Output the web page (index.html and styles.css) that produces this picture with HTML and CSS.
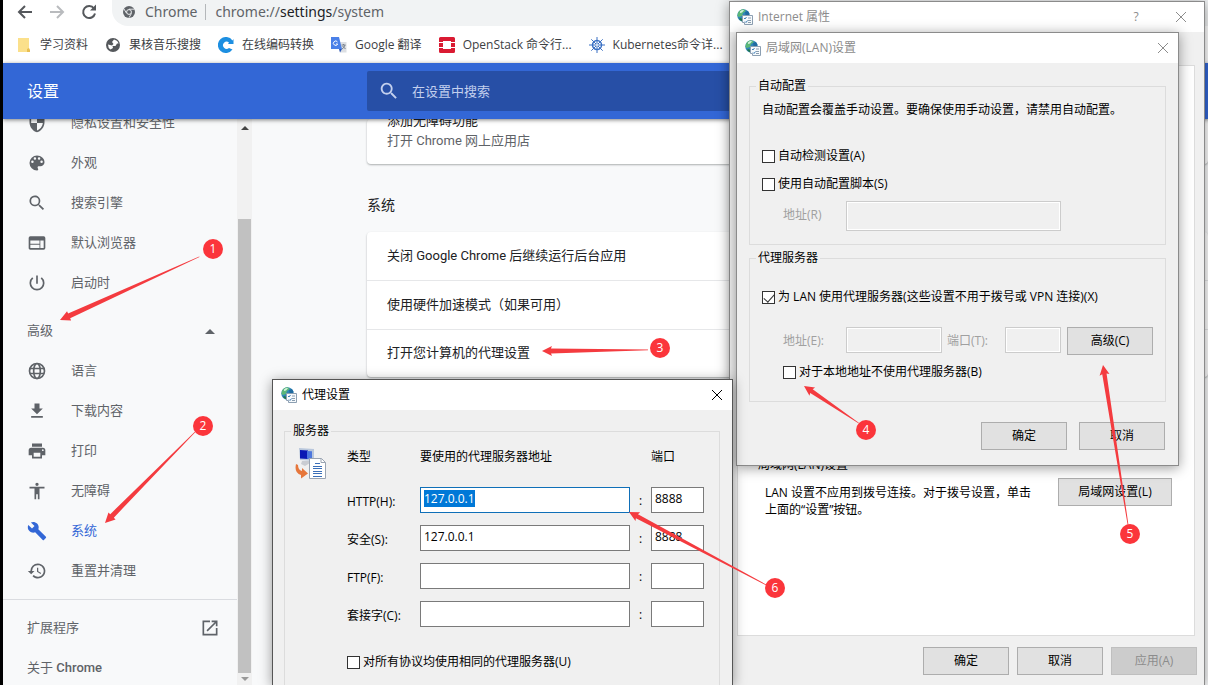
FILE: index.html
```html
<!DOCTYPE html>
<html lang="zh-CN">
<head>
    <meta charset="UTF-8">
    <meta name="viewport" content="width=device-width, initial-scale=1.0">
    <title>设置 - 系统</title>
    <link rel="stylesheet" href="styles.css">
</head>
<body>
    <!-- shared icons -->
    <svg class="defs" width="0" height="0">
        <symbol id="i-inet" viewBox="0 0 16 16">
            <circle cx="6.5" cy="6.5" r="6.2" fill="#2f86b8"/>
            <path d="M1 4Q3 0 7 .4L9 2 6 4 5 7 2 8 .4 7Z" fill="#5cb878"/>
            <path d="M3 2.5Q5 .8 7 1.2L5 3.5 3 4Z" fill="#d5f2dc"/>
            <path d="M8 3l3-1 1.6 3-2 2-2-1z" fill="#1f6aa0"/>
            <path d="M3 9l3 1 1 3Q4 12.500 2 10z" fill="#23774f"/>
            <path d="M5.500 6.500h10v9h-8v-2h-2z" fill="#f7fafc" stroke="#8c9fb2"/>
            <path d="M11 9h3M11 11.500h3M11 13.500h3" stroke="#8a9db0"/>
            <path d="M7 9l1 1 1.500-2M8 12.500l1 1 1.500-2" stroke="#3d7fb8" fill="none"/>
        </symbol>
        <symbol id="i-x" viewBox="0 0 12 12">
            <path d="M1 1l10 10M11 1L1 11" stroke="currentColor" fill="none"/>
        </symbol>
        <symbol id="i-search" viewBox="0 0 24 24">
            <path fill="currentColor" d="M15.500 14h-.8l-.3-.3A6.500 6.500 0 1 0 13.700 14.400l.3.3v.8l5 5 1.500-1.500-5-5zm-6 0a4.500 4.500 0 1 1 0-9 4.500 4.500 0 0 1 0 9z"/>
        </symbol>
    </svg>

    <div class="browser">
        <div class="toolbar">
            <button class="nav-btn" aria-label="后退"><svg width="18" height="18" viewBox="0 0 18 18"><path d="M16 9H3M9 3L3 9l6 6" fill="none" stroke="#55585c" stroke-width="2"/></svg></button>
            <button class="nav-btn" aria-label="前进"><svg width="18" height="18" viewBox="0 0 18 18"><path d="M2 9h13M9 3l6 6-6 6" fill="none" stroke="#b9bbbe" stroke-width="2"/></svg></button>
            <button class="nav-btn" aria-label="重新加载"><svg width="18" height="18" viewBox="0 0 18 18"><path d="M14 5.500A6 6 0 1 0 15 10.500" fill="none" stroke="#55585c" stroke-width="2"/><path d="M16 1.500v6h-6z" fill="#55585c"/></svg></button>
            <div class="omnibox">
                <svg width="12" height="12" viewBox="0 0 12 12"><circle cx="6" cy="6" r="6" fill="#5f6368"/><circle cx="6" cy="6" r="2.400" fill="#5f6368" stroke="#f1f3f4"/><path d="M6 3.200h5.500M3.500 7.200L1 3M8.500 7.400L6 11.700" stroke="#f1f3f4" stroke-width=".9"/></svg>
                <span class="scheme">Chrome</span>
                <span class="sep"></span>
                <span class="url">chrome://<b>settings</b>/system</span>
            </div>
        </div>

        <nav class="bookmarks">
            <a href="#"><svg width="16" height="16" viewBox="0 0 16 16"><path d="M2 1h11v14H2z" fill="#fbe08b"/><path d="M11 12l2-1 1 2v2h-3z" fill="#e9bf52"/></svg>学习资料</a>
            <a href="#"><svg width="16" height="16" viewBox="0 0 16 16"><circle cx="8" cy="8" r="7" fill="#55585c"/><path d="M9 2.500L7 5l1.500 2L7 8.500 3 7.500Q3 11 5.500 12.500L8 11l-.5-2h3l1.500-2.500h1.500Q13 3.500 9 2.500z" fill="#fff"/></svg>果核音乐搜搜</a>
            <a href="#"><svg width="16" height="16" viewBox="0 0 16 16"><path d="M14.500 3.500A8 8 0 1 0 14.500 12.500L11 11A3.600 3.600 0 1 1 11 5.500L10 7h5.500V2z" fill="#1d8fe1"/></svg>在线编码转换</a>
            <a href="#"><svg width="16" height="16" viewBox="0 0 16 16"><path d="M7 5h8.500v10.500H9z" fill="#dcdfe3"/><path d="M0 0h8l3 12H0z" fill="#4a80e8"/><path d="M8 12h3l-2 3.500z" fill="#2a56b8"/><path d="M6.500 5A2.200 2.200 0 1 0 6.700 7H5" fill="none" stroke="#fff"/><path d="M10.500 8h4M12.500 7v1M14 8q-1 3-3 4M11.500 9l3 3" fill="none" stroke="#78828e"/></svg>Google 翻译</a>
            <a href="#"><svg width="16" height="16" viewBox="0 0 16 16"><path fill="#da1a32" d="M1.500 0h13A1.500 1.500 0 0 1 16 1.500V5h-4V4H4v1H0V1.500A1.500 1.500 0 0 1 1.500 0zM0 6h4v4H0zM12 6h4v4h-4zM0 11h4v1h8v-1h4v3.500a1.500 1.500 0 0 1-1.500 1.500h-13A1.500 1.500 0 0 1 0 14.500z"/></svg>OpenStack 命令行...</a>
            <a href="#"><svg width="16" height="16" viewBox="0 0 16 16"><g fill="none" stroke="#3b70c4"><circle cx="8" cy="8" r="4.500" stroke-width="1.500"/><path d="M8 0v16M0 8h16M2.300 2.300l11.400 11.400M13.700 2.300L2.300 13.700"/></g><circle cx="8" cy="8" r="1" fill="#fff"/></svg>Kubernetes命令详...</a>
        </nav>

        <header class="header">
            <h1>设置</h1>
            <div class="search">
                <svg width="22" height="22"><use href="#i-search"/></svg>
                <input type="text" aria-label="搜索" placeholder="在设置中搜索">
            </div>
        </header>

        <div class="content">
            <nav class="sidebar">
                <a href="#"><svg viewBox="0 0 24 24"><path d="M12 1L3 5v6c0 5.500 3.800 10.700 9 12 5.200-1.300 9-6.500 9-12V5zm0 11h7c-.5 4.100-3.300 7.800-7 8.900V12H5V6.300l7-3.100z"/></svg>隐私设置和安全性</a>
                <a href="#"><svg viewBox="0 0 24 24"><path d="M12 3a9 9 0 0 0 0 18c.8 0 1.500-.7 1.500-1.500 0-.4-.1-.7-.4-1-.2-.3-.4-.6-.4-1 0-.8.7-1.500 1.500-1.500H16a5 5 0 0 0 5-5c0-4.400-4-8-9-8zm-5.500 9a1.500 1.500 0 1 1 0-3 1.500 1.500 0 0 1 0 3zm3-4a1.500 1.500 0 1 1 0-3 1.500 1.500 0 0 1 0 3zm5 0a1.500 1.500 0 1 1 0-3 1.500 1.500 0 0 1 0 3zm3 4a1.500 1.500 0 1 1 0-3 1.500 1.500 0 0 1 0 3z"/></svg>外观</a>
                <a href="#"><svg><use href="#i-search"/></svg>搜索引擎</a>
                <a href="#"><svg viewBox="0 0 24 24"><path d="M20 4H4a2 2 0 0 0-2 2v12c0 1.100.9 2 2 2h16a2 2 0 0 0 2-2V6a2 2 0 0 0-2-2zm-5 14H4v-4h11zm0-5H4V9h11zm5 5h-4V9h4z"/></svg>默认浏览器</a>
                <a href="#"><svg viewBox="0 0 24 24"><path d="M13 3h-2v10h2zm4.800 2.200l-1.400 1.400A7 7 0 1 1 7.600 6.600L6.200 5.200a9 9 0 1 0 11.600 0z"/></svg>启动时</a>
                <button class="advanced">高级<span class="tri-up"></span></button>
                <a href="#"><svg viewBox="0 0 24 24"><g fill="none" stroke="currentColor" stroke-width="2"><circle cx="12" cy="12" r="9"/><ellipse cx="12" cy="12" rx="4" ry="9"/><path d="M3.500 9h17M3.500 15h17"/></g></svg>语言</a>
                <a href="#"><svg viewBox="0 0 24 24"><path d="M19 9h-4V3H9v6H5l7 7zM5 18v2h14v-2z"/></svg>下载内容</a>
                <a href="#"><svg viewBox="0 0 24 24"><path d="M19 8H5a3 3 0 0 0-3 3v6h4v4h12v-4h4v-6a3 3 0 0 0-3-3zm-3 11H8v-5h8zm3-7a1 1 0 1 1 0-2 1 1 0 0 1 0 2zM18 3H6v4h12z"/></svg>打印</a>
                <a href="#"><svg viewBox="0 0 24 24"><path d="M12 2a2 2 0 1 1 0 4 2 2 0 0 1 0-4zm9 7h-6v13h-2v-6h-2v6H9V9H3V7h18z"/></svg>无障碍</a>
                <a href="#" class="active"><svg viewBox="0 0 24 24"><path d="M22.700 19l-9.100-9.100c.9-2.300.4-5-1.500-6.900-2-2-5-2.400-7.400-1.300L9 6 6 9 1.600 4.700C.4 7.100.9 10.100 2.900 12.100c1.900 1.900 4.600 2.400 6.900 1.500l9.100 9.100c.4.4 1 .4 1.400 0l2.300-2.300c.5-.4.5-1.100.1-1.400z"/></svg>系统</a>
                <a href="#"><svg viewBox="0 0 24 24"><path d="M13 3a9 9 0 0 0-9 9H1l4 4 4-4H6a7 7 0 1 1 2 4.900L6.600 18.300A9 9 0 1 0 13 3zm-1 5v5l4.300 2.500.7-1.200-3.500-2.100V8z"/></svg>重置并清理</a>
                <hr>
                <a href="#" class="plain">扩展程序<svg viewBox="0 0 24 24"><path d="M19 19H5V5h7V3H3v18h18v-9h-2zM14 3v2h3.600l-9.800 9.800 1.400 1.400L19 6.400V10h2V3z"/></svg></a>
                <a href="#" class="plain about"><span>关于 <b>Chrome</b></span></a>
            </nav>
            <div class="scrollbar">
                <span class="sb-btn"><span class="sb-up"></span></span>
                <span class="sb-track"><span class="sb-thumb"></span></span>
                <span class="sb-btn"><span class="sb-down"></span></span>
            </div>
            <main class="main">
                <section class="card top-card">
                    <div>添加无障碍功能</div>
                    <div class="sub">打开 Chrome 网上应用店</div>
                </section>
                <h2>系统</h2>
                <section class="card">
                    <div class="row">关闭 Google Chrome 后继续运行后台应用</div>
                    <div class="row">使用硬件加速模式（如果可用）</div>
                    <div class="row">打开您计算机的代理设置</div>
                </section>
            </main>
        </div>
    </div>

    <!-- Internet properties -->
    <div class="window win-inet">
        <div class="titlebar inactive">
            <svg class="app-icon"><use href="#i-inet"/></svg>
            <span class="title">Internet 属性</span>
            <button class="tb-btn" aria-label="帮助">?</button>
            <button class="tb-btn" aria-label="关闭"><svg width="12" height="12"><use href="#i-x"/></svg></button>
        </div>
        <div class="tab-panel">
            <div class="group-title">局域网(LAN)设置</div>
            <div class="lan-row">
                <p>LAN 设置不应用到拨号连接。对于拨号设置，单击上面的“设置”按钮。</p>
                <button class="btn wide">局域网设置(L)</button>
            </div>
        </div>
        <div class="btn-row">
            <button class="btn">确定</button>
            <button class="btn">取消</button>
            <button class="btn" disabled>应用(A)</button>
        </div>
    </div>

    <!-- LAN settings -->
    <div class="window win-lan">
        <div class="titlebar inactive">
            <svg class="app-icon"><use href="#i-inet"/></svg>
            <span class="title">局域网(LAN)设置</span>
            <button class="tb-btn" aria-label="关闭"><svg width="12" height="12"><use href="#i-x"/></svg></button>
        </div>
        <div class="win-body">
            <fieldset class="auto">
                <legend>自动配置</legend>
                <p>自动配置会覆盖手动设置。要确保使用手动设置，请禁用自动配置。</p>
                <label class="check"><input type="checkbox">自动检测设置(A)</label>
                <label class="check"><input type="checkbox">使用自动配置脚本(S)</label>
                <div class="addr">
                    <label for="script-url">地址(R)</label>
                    <input type="text" id="script-url" class="script-url" disabled>
                </div>
            </fieldset>
            <fieldset class="proxy">
                <legend>代理服务器</legend>
                <label class="check"><input type="checkbox" checked>为 LAN 使用代理服务器(这些设置不用于拨号或 VPN 连接)(X)</label>
                <div class="addr">
                    <label for="proxy-addr">地址(E):</label>
                    <input type="text" id="proxy-addr" class="proxy-addr" disabled>
                    <label for="proxy-port" class="port-label">端口(T):</label>
                    <input type="text" id="proxy-port" class="proxy-port" disabled>
                    <button class="btn">高级(C)</button>
                </div>
                <label class="check indent"><input type="checkbox">对于本地地址不使用代理服务器(B)</label>
            </fieldset>
            <div class="btn-row">
                <button class="btn">确定</button>
                <button class="btn">取消</button>
            </div>
        </div>
    </div>

    <!-- Proxy settings -->
    <div class="window win-proxy">
        <div class="titlebar">
            <svg class="app-icon"><use href="#i-inet"/></svg>
            <span class="title">代理设置</span>
            <button class="tb-btn" aria-label="关闭"><svg width="12" height="12"><use href="#i-x"/></svg></button>
        </div>
        <fieldset class="servers">
            <legend>服务器</legend>
            <svg class="server-icon" width="32" height="32" viewBox="0 0 32 32">
                <path d="M4 0l15 1v12L5 12z" fill="#b9c7dc"/>
                <path d="M5 2l8 .5V11l-8-.5z" fill="#0a18b4"/>
                <path d="M12 3l5 .3V11l-5-.3z" fill="#4d77dd"/>
                <path d="M7 13h8v2l-5 3-4-2z" fill="#c9ccd2"/>
                <path d="M14.500 10.500h12l4 4v16h-16z" fill="#fff" stroke="#9aa4b2"/>
                <path d="M26 10.500v4h4.500" fill="none" stroke="#9aa4b2"/>
                <path d="M20 15.500h5M18 18.500h9M18 20.500h9M18 23.500h9M18 25.500h9M18 28.500h9" stroke="#3b6fb8"/>
                <path d="M1 16Q-1 25 6 27v3.500l7-5L7 20v3Q3 22 3 17z" fill="#e6763b"/>
            </svg>
            <div class="grid">
                <span class="head">类型</span>
                <span class="head">要使用的代理服务器地址</span>
                <span></span>
                <span class="head">端口</span>

                <label for="http">HTTP(H):</label>
                <input type="text" id="http" class="current" value="127.0.0.1">
                <span class="colon">:</span>
                <input type="text" aria-label="HTTP 端口" value="8888">

                <label for="secure">安全(S):</label>
                <input type="text" id="secure" value="127.0.0.1">
                <span class="colon">:</span>
                <input type="text" aria-label="安全端口" value="8888">

                <label for="ftp">FTP(F):</label>
                <input type="text" id="ftp">
                <span class="colon">:</span>
                <input type="text" aria-label="FTP 端口">

                <label for="socks">套接字(C):</label>
                <input type="text" id="socks">
                <span class="colon">:</span>
                <input type="text" aria-label="套接字端口">

                <label class="check same"><input type="checkbox">对所有协议均使用相同的代理服务器(U)</label>
            </div>
        </fieldset>
    </div>

    <!-- numbered steps -->
    <svg class="steps">
        <g class="arrow">
            <path transform="translate(60 320) rotate(-24.400)" d="M0 0L10-5 10-2.500 153-.3V.3L10 2.500 10 5z"/>
            <path transform="translate(105 523) rotate(-45.300)" d="M0 0L10-5 10-2.500 128-.3V.3L10 2.500 10 5z"/>
            <path transform="translate(542 351) rotate(-.6)" d="M0 0L10-5 9-2.500 106-.3V.3L9 2.500 10 5z"/>
            <path transform="translate(804 386) rotate(34.200)" d="M0 0L10-5 9-2.200 66-.3V.3L9 2.200 10 5z"/>
            <path transform="translate(1103 365) rotate(81.100)" d="M0 0L10-5 9-2.200 162-.4V.4L9 2.200 10 5z"/>
            <path transform="translate(629 512) rotate(28)" d="M0 0L10-5 9-2.200 156-.4V.4L9 2.200 10 5z"/>
        </g>
        <g class="badge">
            <circle cx="213" cy="249" r="10"/><text x="213" y="253">1</text>
            <circle cx="203" cy="426" r="10"/><text x="203" y="430">2</text>
            <circle cx="660" cy="348" r="10"/><text x="660" y="352">3</text>
            <circle cx="866" cy="430" r="10"/><text x="866" y="434">4</text>
            <circle cx="1130" cy="534" r="10"/><text x="1130" y="538">5</text>
            <circle cx="775" cy="588" r="10"/><text x="775" y="592">6</text>
        </g>
    </svg>

    <script>
        window.onload = function() {
            document.getElementById('http').select();
        };
    </script>
</body>
</html>
```
FILE: styles.css
```css
* {
    box-sizing: border-box;
}
body {
    margin: 0;
    height: 100vh;
    overflow: hidden;
    position: relative;
    background: #000;
    font-family: 'Open Sans', 'Noto Sans CJK SC', sans-serif;
    font-size: 12px;
    line-height: 16px;
    color: #000;
}
button, input {
    font: inherit;
    color: inherit;
}
button {
    padding: 0;
    border: none;
    background: none;
}
a {
    color: inherit;
    text-decoration: none;
}
p {
    margin: 0;
}
.defs {
    position: absolute;
}

/* browser */
.browser {
    isolation: isolate;
    height: 100%;
    margin-left: 3px;
    display: flex;
    flex-direction: column;
    background: #fff;
}
.toolbar {
    display: flex;
    align-items: center;
    height: 26px;
    padding-left: 13px;
    gap: 14px;
}
.nav-btn {
    width: 18px;
    height: 18px;
    margin-bottom: 2px;
}
.nav-btn svg {
    display: block;
}
.omnibox {
    flex: 1;
    display: flex;
    align-items: center;
    height: 26px;
    padding: 0 0 2px 11px;
    border-radius: 0 0 0 16px;
    background: #f1f3f4;
    font-family: 'Noto Sans', sans-serif;
    font-size: 14px;
    color: #5f6368;
}
.scheme {
    margin-left: 10px;
}
.sep {
    width: 1px;
    height: 16px;
    margin: 0 9px 0 8px;
    background: #b4b7ba;
}
.url b {
    font-weight: 400;
    color: #202124;
}
.bookmarks {
    display: flex;
    align-items: center;
    height: 37px;
    padding-left: 13px;
    gap: 17px;
    color: #3c4043;
    white-space: nowrap;
}
.bookmarks a {
    display: flex;
    align-items: center;
    gap: 8px;
}
.header {
    position: relative;
    z-index: 1;
    display: flex;
    align-items: center;
    height: 56px;
    padding-left: 24px;
    background: #3367d6;
    color: #fff;
    box-shadow: 0 1px 4px rgba(0, 0, 0, 0.5);
}
.header h1 {
    width: 340px;
    margin: 0;
    font-size: 16px;
    font-weight: 400;
}
.search {
    flex: 1;
    display: flex;
    align-items: center;
    height: 40px;
    margin-right: 24px;
    padding-left: 11px;
    border-radius: 2px;
    background: #274fa6;
    color: #c3d0ee;
}
.search input {
    flex: 1;
    margin-left: 12px;
    padding: 0;
    border: none;
    outline: none;
    background: none;
    font-size: 13px;
}
.search input::placeholder {
    color: #c3d0ee;
}
.content {
    flex: 1;
    min-height: 0;
    display: flex;
    overflow: hidden;
    background: #f8f9fa;
    font-family: Roboto, 'Noto Sans CJK SC', sans-serif;
    font-size: 13px;
}
.sidebar {
    width: 234px;
    margin-top: -16px;
    color: #5f6368;
}
.sidebar a,
.advanced {
    display: flex;
    align-items: center;
    height: 40px;
    padding: 0 17px 0 24px;
}
.sidebar svg {
    width: 20px;
    height: 20px;
    margin-right: 24px;
    fill: currentColor;
}
.sidebar .active {
    color: #3367d6;
}
.advanced {
    width: 100%;
    margin-top: 8px;
    justify-content: space-between;
}
.sidebar .plain {
    justify-content: space-between;
}
.sidebar .plain svg {
    margin-right: 0;
}
.about b {
    font-weight: 500;
}
.tri-up {
    margin-right: 5px;
    border: 5px solid transparent;
    border-top: none;
    border-bottom-color: #5f6368;
}
.sidebar hr {
    margin: 8px 0;
    border: none;
    border-top: 1px solid #dadce0;
}
.scrollbar {
    width: 15px;
    display: flex;
    flex-direction: column;
    background: #f1f1f1;
}
.sb-btn {
    display: flex;
    align-items: center;
    justify-content: center;
    height: 17px;
}
.sb-btn:last-child {
    height: 12px;
}
.sb-up,
.sb-down {
    border: 4px solid transparent;
}
.sb-up {
    border-top: none;
    border-bottom-color: #444;
}
.sb-down {
    border-bottom: none;
    border-top-color: #999;
}
.sb-track {
    flex: 1;
    display: flex;
    padding: 83px 1px 0;
}
.sb-thumb {
    flex: 1;
    background: #c1c1c1;
}
.main {
    flex: 1;
    padding-left: 115px;
    color: #202124;
}
.card {
    background: #fff;
    border-radius: 4px;
    box-shadow: 0 1px 2px rgba(60, 64, 67, 0.4);
}
.top-card {
    display: flow-root;
    height: 45px;
    margin-bottom: 33px;
    padding-left: 20px;
    line-height: 20px;
}
.top-card div:first-child {
    margin-top: -8px;
}
.sub {
    color: #5f6368;
}
.main h2 {
    margin: 0 0 19px;
    font-size: 14px;
    font-weight: 400;
    line-height: 16px;
}
.row {
    display: flex;
    align-items: center;
    height: 49px;
    padding: 0 20px 1px;
}
.row:not(:last-child) {
    border-bottom: 1px solid #e6e7e9;
}
.row:last-child {
    height: 47px;
}

/* dialog windows */
.window {
    position: absolute;
    border: 1px solid #8b8b8b;
    background: #f0f0f0;
    box-shadow: 0 2px 12px rgba(0, 0, 0, 0.4);
}
.win-inet {
    left: 729px;
    top: 1px;
    bottom: 0;
    width: 476px;
    border-bottom: none;
}
.win-lan {
    left: 736px;
    top: 32px;
    width: 443px;
}
.win-proxy {
    left: 272px;
    top: 379px;
    bottom: 0;
    display: flex;
    flex-direction: column;
    width: 461px;
    border-color: #555;
    border-bottom: none;
}
.titlebar {
    display: flex;
    align-items: center;
    height: 30px;
    padding: 0 9px 0 8px;
    background: #fff;
}
.inactive {
    color: #8c8c8c;
}
.app-icon {
    width: 16px;
    height: 16px;
    margin-right: 5px;
}
.title {
    flex: 1;
}
.tb-btn {
    display: flex;
    align-items: center;
    justify-content: center;
    width: 12px;
    height: 16px;
}
.win-inet .titlebar {
    padding: 0 17px 0 7px;
}
.win-inet .tb-btn + .tb-btn {
    margin-left: 33px;
}
.btn {
    width: 86px;
    height: 28px;
    border: 1px solid #adadad;
    background: #e1e1e1;
}
.btn:disabled {
    border-color: #bfbfbf;
    background: #ccc;
    color: #8c8c8c;
}
.wide {
    width: 114px;
}
.btn-row {
    display: flex;
    justify-content: flex-end;
}
.win-inet .btn-row {
    gap: 8px;
    padding: 11px 7px 0 0;
}
.tab-panel {
    height: 571px;
    margin: 33px 9px 0 7px;
    padding: 391px 22px 0 20px;
    border: 1px solid #dcdcdc;
    background: #fff;
}
.lan-row {
    display: flex;
    justify-content: space-between;
    padding: 5px 0 0 7px;
}
.lan-row p {
    width: 276px;
    margin-top: 6px;
    line-height: 17px;
}
fieldset {
    min-width: 0;
    margin: 0;
    padding: 0;
    border: 1px solid #dcdcdc;
}
legend {
    margin-left: 6px;
    padding: 0 2px;
}
.check {
    display: flex;
    align-items: center;
    height: 28px;
    gap: 3px;
}
.check input {
    appearance: none;
    display: flex;
    justify-content: center;
    align-items: flex-start;
    width: 13px;
    height: 13px;
    margin: 0;
    border: 1px solid #333;
    background: #fff;
}
.check input:checked::after {
    content: '';
    width: 5px;
    height: 9px;
    border: solid #333;
    border-width: 0 1px 1px 0;
    transform: rotate(42deg);
}
.win-body {
    padding: 15px 12px 15px;
}
.auto p {
    margin: 8px 0 24px 12px;
}
.auto .check,
.proxy .check {
    margin-left: 12px;
}
.proxy .indent {
    margin-left: 33px;
}
.auto {
    padding-bottom: 13px;
    margin-bottom: 5px;
}
.auto .addr {
    padding-top: 3px;
}
.proxy {
    padding: 17px 0 15px;
}
.addr {
    display: flex;
    align-items: flex-start;
    padding-left: 33px;
    color: #a0a0a0;
}
.addr label {
    width: 63px;
    line-height: 28px;
}
.addr input {
    border: 1px solid #ccc;
    background: #f0f0f0;
    box-shadow: inset 0 0 0 1px #fff;
}
.addr .btn {
    margin-left: 6px;
    color: #000;
}
.script-url {
    width: 215px;
    height: 30px;
}
.proxy .addr {
    height: 47px;
    padding-top: 16px;
}
.proxy-addr {
    width: 96px;
    height: 26px;
}
.addr .port-label {
    width: 58px;
    margin-left: 5px;
}
.proxy-port {
    width: 56px;
    height: 26px;
}
.win-lan .btn-row {
    gap: 12px;
    padding: 20px 1px 0 0;
}
.servers {
    flex: 1;
    display: flex;
    align-items: flex-start;
    margin: 13px 12px 0 11px;
    border-bottom: none;
}
.server-icon {
    margin: 9px 20px 0 10px;
}
.grid {
    display: grid;
    grid-template-columns: 73px 210px 21px 53px;
    grid-template-rows: 42px repeat(4, 38px);
    align-items: center;
}
.grid label:not(.check) {
    padding-top: 3px;
}
.head {
    align-self: start;
    padding-top: 10px;
}
.grid input[type="text"] {
    width: 100%;
    height: 26px;
    padding: 0 3px 3px;
    border: 1px solid #7a7a7a;
    background: #fff;
    outline: none;
}
.grid input.current {
    border-color: #0f6fb8;
}
.grid input::selection {
    background: #0078d7;
    color: #fff;
}
.colon {
    padding-top: 2px;
    text-align: center;
}
.grid .same {
    grid-column: 1 / -1;
    margin-top: 15px;
}

/* steps overlay */
.steps {
    position: absolute;
    left: 0;
    top: 0;
    width: 100%;
    height: 100%;
    pointer-events: none;
}
.arrow {
    fill: #f43b3f;
}
.badge circle {
    fill: #fb353b;
}
.badge text {
    fill: #fff;
    font-size: 12px;
    text-anchor: middle;
}
```
